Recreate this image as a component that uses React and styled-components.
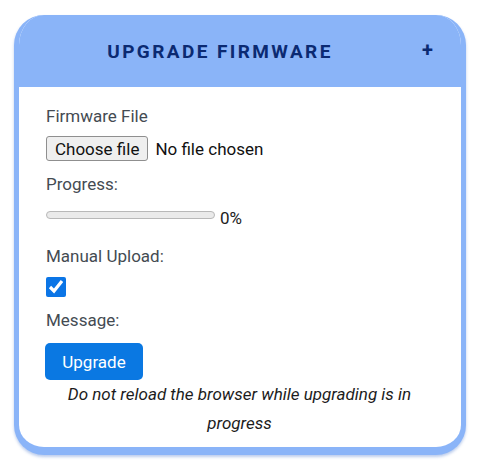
import React from "react";
import styled, { createGlobalStyle } from "styled-components";

const GlobalStyle = createGlobalStyle`
  body {
    margin: 0;
    background: #ffffff;
    font-family: Roboto, "Liberation Sans", sans-serif;
  }
`;

const Page = styled.div`
  padding: 15px 12px 10px 14px;
`;

const Card = styled.section`
  width: 452px;
  box-sizing: border-box;
  border: 5px solid #8ab4f8;
  border-top: 0;
  border-bottom-width: 8px;
  border-radius: 30px;
  overflow: hidden;
  background: #fff;
  box-shadow: 0 2px 3px rgba(60, 110, 200, 0.35);
`;

const Header = styled.div`
  height: 72px;
  background: #8ab4f8;
  display: flex;
  align-items: center;
  padding: 0 28px 0 0;
`;

const Title = styled.h2`
  flex: 1;
  margin: 0;
  text-align: center;
  font-size: 19px;
  font-weight: 700;
  letter-spacing: 2.4px;
  color: #0b2a72;
`;

const Toggle = styled.span`
  width: 12px;
  text-align: right;
  font-size: 20px;
  font-weight: 700;
  color: #0b2a72;
  margin-top: -2px;
`;

const Body = styled.div`
  padding: 17px 20px 9px 27px;
  display: flex;
  flex-direction: column;
  align-items: flex-start;
  color: #444b52;
  font-size: 17px;
`;

const Label = styled.div`
  line-height: 24px;
  margin-bottom: ${(p) => p.$gap}px;
`;

const FileRow = styled.label`
  display: flex;
  align-items: center;
  gap: 7px;
  color: #111;
  margin-bottom: 11px;
  input {
    display: none;
  }
`;

const FileButton = styled.span`
  box-sizing: border-box;
  height: 25px;
  padding: 0 8px;
  display: flex;
  align-items: center;
  background: #efefef;
  border: 1px solid #8f8f8f;
  border-radius: 3px;
  color: #111;
`;

const ProgressRow = styled.div`
  display: flex;
  align-items: center;
  gap: 5px;
  line-height: 24px;
  margin: 10px 0 14px;
  color: #222;
`;

const Track = styled.div`
  width: 167px;
  height: 6px;
  border: 1px solid #b8b8b8;
  border-radius: 4px;
  background: #eaeaea;
  margin-top: -6px;
`;

const Check = styled.input`
  width: 20px;
  height: 20px;
  margin: 0 0 11px;
  accent-color: #0b75e6;
`;

const Button = styled.button`
  font-family: Roboto, "Liberation Sans", sans-serif;
  font-size: 17px;
  color: #fff;
  background: #0a78e2;
  border: 0;
  border-radius: 5px;
  width: 98px;
  height: 37px;
  margin: 0 0 0 -1px;
`;

const Note = styled.p`
  align-self: stretch;
  text-align: center;
  font-style: italic;
  color: #1c1c1c;
  line-height: 29px;
  margin: 0;
  padding: 0 28px 0 20px;
`;

export default function App() {
  return (
    <Page>
      <GlobalStyle />
      <Card>
        <Header>
          <Title>UPGRADE FIRMWARE</Title>
          <Toggle>+</Toggle>
        </Header>
        <Body>
          <Label $gap={8}>Firmware File</Label>
          <FileRow>
            <input type="file" />
            <FileButton>Choose file</FileButton>
            <span>No file chosen</span>
          </FileRow>
          <Label $gap={0}>Progress:</Label>
          <ProgressRow>
            <Track />
            <span>0%</span>
          </ProgressRow>
          <Label $gap={9}>Manual Upload:</Label>
          <Check type="checkbox" defaultChecked />
          <Label $gap={11}>Message:</Label>
          <Button>Upgrade</Button>
          <Note>Do not reload the browser while upgrading is in progress</Note>
        </Body>
      </Card>
    </Page>
  );
}
